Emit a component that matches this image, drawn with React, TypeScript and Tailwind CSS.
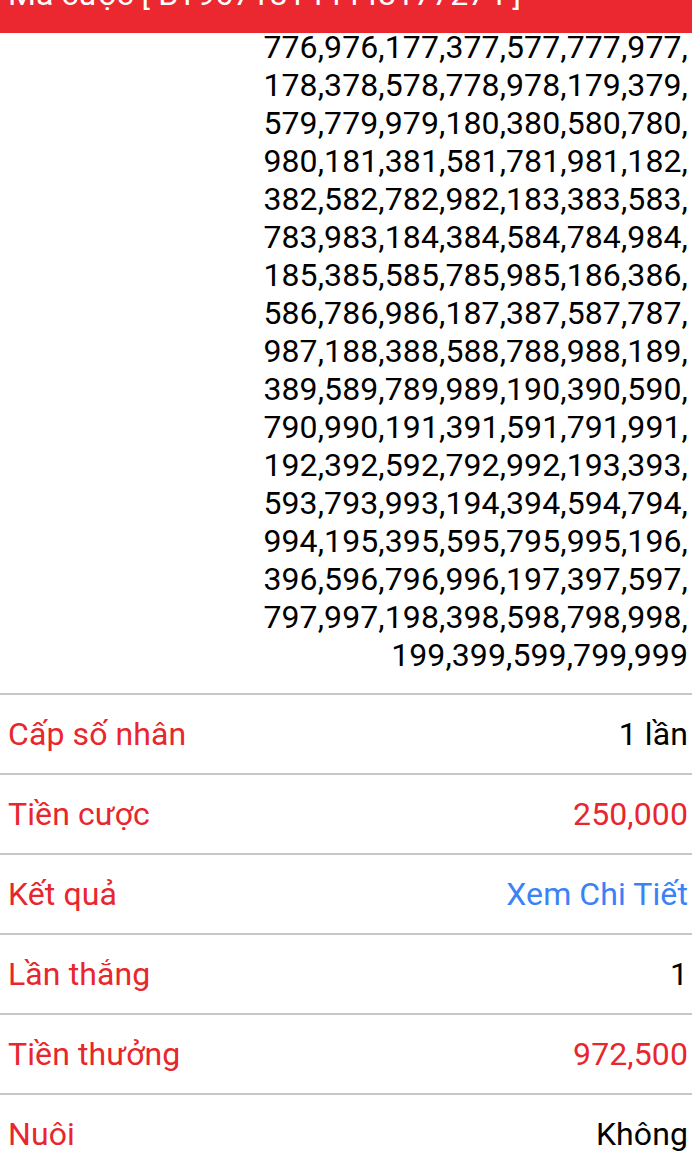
const lines = [
  "776,976,177,377,577,777,977,",
  "178,378,578,778,978,179,379,",
  "579,779,979,180,380,580,780,",
  "980,181,381,581,781,981,182,",
  "382,582,782,982,183,383,583,",
  "783,983,184,384,584,784,984,",
  "185,385,585,785,985,186,386,",
  "586,786,986,187,387,587,787,",
  "987,188,388,588,788,988,189,",
  "389,589,789,989,190,390,590,",
  "790,990,191,391,591,791,991,",
  "192,392,592,792,992,193,393,",
  "593,793,993,194,394,594,794,",
  "994,195,395,595,795,995,196,",
  "396,596,796,996,197,397,597,",
  "797,997,198,398,598,798,998,",
  "199,399,599,799,999",
];

const rows: { label: string; value: string; tone: "black" | "red" | "blue" }[] = [
  { label: "Cấp số nhân", value: "1 lần", tone: "black" },
  { label: "Tiền cược", value: "250,000", tone: "red" },
  { label: "Kết quả", value: "Xem Chi Tiết", tone: "blue" },
  { label: "Lần thắng", value: "1", tone: "black" },
  { label: "Tiền thưởng", value: "972,500", tone: "red" },
  { label: "Nuôi", value: "Không", tone: "black" },
];

const toneClass = {
  black: "text-black",
  red: "text-[#e8262d]",
  blue: "text-[#3b82f6]",
};

export default function App() {
  return (
    <div className="h-[1173px] overflow-hidden bg-white font-['Roboto',sans-serif] text-[32px] tracking-[0.1px]">
      {/* header, page is scrolled so the title is cut off */}
      <div className="-mt-[25px] bg-[#eb2730] px-2 pb-[20px] leading-[38px] text-white">
        Mã cược [ BT96718144448177274 ]
      </div>

      <div className="-mt-[5px] pb-[19px] pr-1 text-right leading-[38px] text-black">
        {lines.map((l) => (
          <div key={l}>{l}</div>
        ))}
      </div>

      {rows.map((r) => (
        <div
          key={r.label}
          className="flex h-[80px] items-center justify-between border-t-2 border-[#c8c8cc] pl-2 pr-1"
        >
          <span className="text-[#e8262d]">{r.label}</span>
          <span className={toneClass[r.tone]}>{r.value}</span>
        </div>
      ))}
    </div>
  );
}
